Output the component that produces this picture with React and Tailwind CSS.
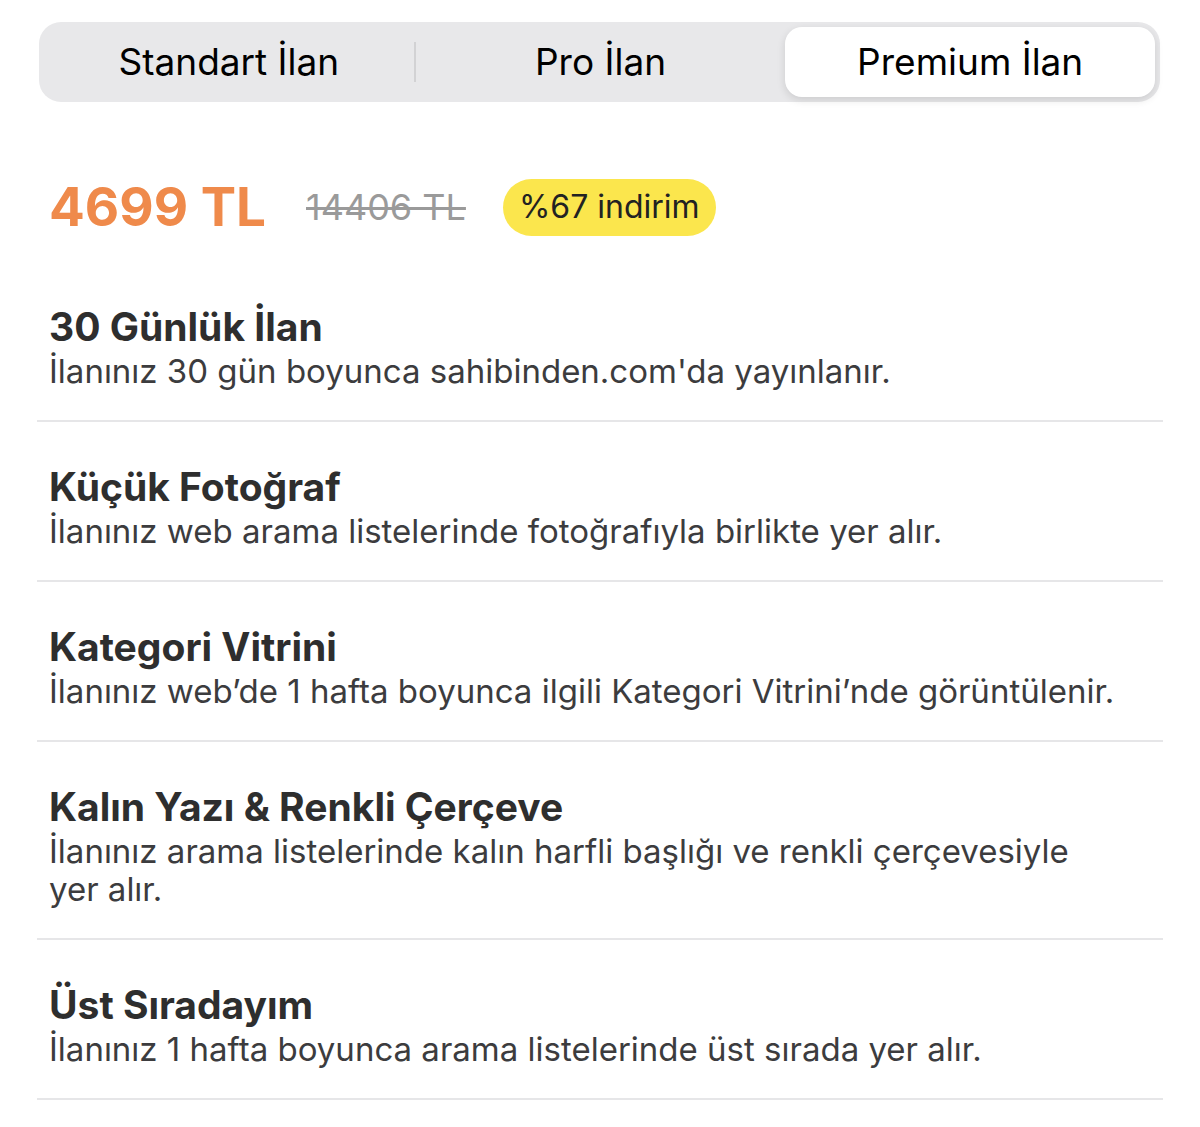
const items = [
  {
    title: "30 Günlük İlan",
    desc: "İlanınız 30 gün boyunca sahibinden.com'da yayınlanır.",
  },
  {
    title: "Küçük Fotoğraf",
    desc: "İlanınız web arama listelerinde fotoğrafıyla birlikte yer alır.",
  },
  {
    title: "Kategori Vitrini",
    desc: "İlanınız web’de 1 hafta boyunca ilgili Kategori Vitrini’nde görüntülenir.",
  },
  {
    title: "Kalın Yazı & Renkli Çerçeve",
    desc: "İlanınız arama listelerinde kalın harfli başlığı ve renkli çerçevesiyle yer alır.",
  },
  {
    title: "Üst Sıradayım",
    desc: "İlanınız 1 hafta boyunca arama listelerinde üst sırada yer alır.",
  },
];

function Tabs() {
  return (
    <div className="ml-[39px] mr-[40px] h-[80px] rounded-[22px] bg-[#e8e8ea] flex items-stretch p-[5px]">
      <div className="flex-1 flex items-center justify-center text-[37px] text-black">
        Standart İlan
      </div>
      <div className="w-[2px] my-[15px] bg-[#d2d2d4]"></div>
      <div className="flex-1 flex items-center justify-center text-[37px] text-black">
        Pro İlan
      </div>
      <div className="flex-1 flex items-center justify-center text-[37px] text-black bg-white rounded-[17px] shadow-[0_3px_8px_rgba(0,0,0,0.12)]">
        Premium İlan
      </div>
    </div>
  );
}

function App() {
  return (
    <div
      className="w-[1200px] h-[1127px] bg-white pt-[22px] overflow-hidden"
      style={{ fontFamily: "Inter, 'Noto Sans', sans-serif" }}
    >
      <Tabs />
      <div className="flex items-center pl-[49px] mt-[76px] h-[58px]">
        <span className="text-[53px] font-bold text-[#ef8a4b] leading-none">
          4699 TL
        </span>
        <span className="ml-[40px] text-[36px] text-[#9a9a9a] line-through decoration-[3px] leading-none">
          14406 TL
        </span>
        <span className="ml-[37px] h-[57px] px-[16px] rounded-full bg-[#fbe64d] text-[32px] text-[#222] flex items-center">
          %67 indirim
        </span>
      </div>
      <div className="mt-[26px] mx-[37px]">
        {items.map((it) => (
          <div
            key={it.title}
            className="px-[12px] pt-[40px] pb-[30px] border-b-2 border-[#e6e6e8]"
          >
            <div className="text-[39px] font-bold text-[#2e2e2e] leading-[50px]">
              {it.title}
            </div>
            <div className="text-[33px] text-[#3c3c3e] leading-[38px] pr-[32px]">
              {it.desc}
            </div>
          </div>
        ))}
      </div>
    </div>
  );
}

export default App;
